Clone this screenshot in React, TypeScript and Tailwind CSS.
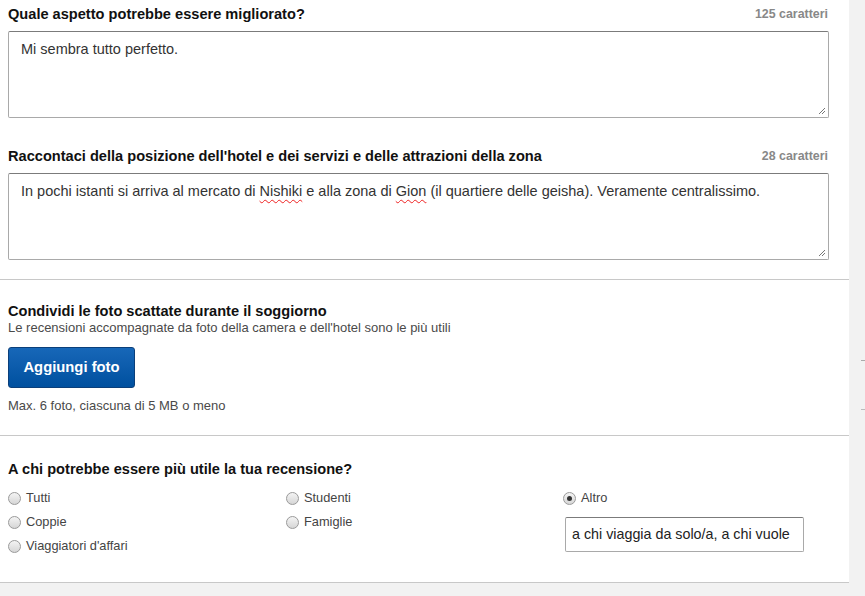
import React from "react";

const font = { fontFamily: '"Liberation Sans", Arial, sans-serif' };

const ResizeGrip = () => (
  <svg
    className="absolute bottom-[2px] right-[2px]"
    width="8"
    height="8"
    viewBox="0 0 8 8"
  >
    <path d="M7 1 L1 7 M7 4 L4 7" stroke="#777" strokeWidth="1" />
  </svg>
);

const Field = ({
  label,
  count,
  children,
}: {
  label: string;
  count: string;
  children: React.ReactNode;
}) => (
  <div>
    <div className="flex items-end justify-between h-4">
      <h3 className="text-[14.6px] leading-4 font-bold text-[#111]">{label}</h3>
      <span className="text-[12.4px] leading-4 font-bold text-[#888] pr-[13px]">
        {count}
      </span>
    </div>
    <div className="relative mt-[9px] mr-[12px] h-[87px] rounded-[2px] border border-[#a9a9a9] border-t-[#7b7b7b] bg-white pl-[12px] pt-[9px] text-[14.5px] leading-4 text-[#333]">
      {children}
      <ResizeGrip />
    </div>
  </div>
);

const Spell = ({ children }: { children: React.ReactNode }) => (
  <span className="underline decoration-wavy decoration-[#e22] decoration-1 underline-offset-[3px]">
    {children}
  </span>
);

const Radio = ({ label, checked }: { label: string; checked?: boolean }) => (
  <label className="flex items-center gap-[5px] h-4 text-[12.8px] text-[#444]">
    <span className="flex h-[13px] w-[13px] items-center justify-center rounded-full border border-[#9a9a9a] bg-gradient-to-b from-[#f4f4f4] to-[#d6d6d6]">
      {checked && <span className="h-[5px] w-[5px] rounded-full bg-[#333]" />}
    </span>
    {label}
  </label>
);

export default function App() {
  return (
    <div className="flex min-h-[596px] w-[865px] bg-[#f2f2f2]" style={font}>
      <div className="w-[849px] shrink-0 bg-white self-start">
        {/* text fields */}
        <div className="px-2 pt-[6px] pb-[19px]">
          <Field label="Quale aspetto potrebbe essere migliorato?" count="125 caratteri">
            Mi sembra tutto perfetto.
          </Field>
          <div className="mt-[30px]">
            <Field
              label="Raccontaci della posizione dell'hotel e dei servizi e delle attrazioni della zona"
              count="28 caratteri"
            >
              In pochi istanti si arriva al mercato di <Spell>Nishiki</Spell> e alla
              zona di <Spell>Gion</Spell> (il quartiere delle geisha). Veramente
              centralissimo.
            </Field>
          </div>
        </div>

        {/* photos */}
        <div className="border-t border-[#c8c8c8] px-2 pt-[23px] pb-[22px]">
          <h3 className="text-[14.6px] leading-4 font-bold text-[#111]">
            Condividi le foto scattate durante il soggiorno
          </h3>
          <p className="mt-[2px] text-[13px] leading-[14px] text-[#4a4a4a]">
            Le recensioni accompagnate da foto della camera e dell'hotel sono le più utili
          </p>
          <button className="mt-[12px] h-[41px] w-[127px] rounded-[3px] border border-[#0b3f7a] bg-gradient-to-b from-[#1767b8] to-[#00509f] text-[14.8px] font-bold text-white">
            Aggiungi foto
          </button>
          <p className="mt-[11px] text-[13px] leading-[14px] text-[#4a4a4a]">
            Max. 6 foto, ciascuna di 5 MB o meno
          </p>
        </div>

        {/* audience */}
        <div className="border-t border-[#c8c8c8] px-2 pt-[25px] pb-[28px] border-b">
          <h3 className="text-[14.6px] leading-4 font-bold text-[#111]">
            A chi potrebbe essere più utile la tua recensione?
          </h3>
          <div className="mt-[13px] grid grid-cols-[278px_277px_1fr]">
            <div className="flex flex-col gap-2">
              <Radio label="Tutti" />
              <Radio label="Coppie" />
              <Radio label="Viaggiatori d'affari" />
            </div>
            <div className="flex flex-col gap-2">
              <Radio label="Studenti" />
              <Radio label="Famiglie" />
            </div>
            <div className="flex flex-col">
              <Radio label="Altro" checked />
              <div className="mt-[11px] ml-[2px] flex h-[35px] w-[239px] items-center rounded-[2px] border border-[#a9a9a9] border-t-[#7b7b7b] px-[6px] text-[14.3px] text-[#222]">
                a chi viaggia da solo/a, a chi vuole
              </div>
            </div>
          </div>
        </div>
      </div>

      {/* sidebar edge */}
      <div className="flex-1 flex flex-col items-end">
        <div className="mt-[360px] h-px w-[4px] bg-[#aaa]" />
        <div className="mt-[48px] h-px w-[4px] bg-[#bbb]" />
      </div>
    </div>
  );
}
